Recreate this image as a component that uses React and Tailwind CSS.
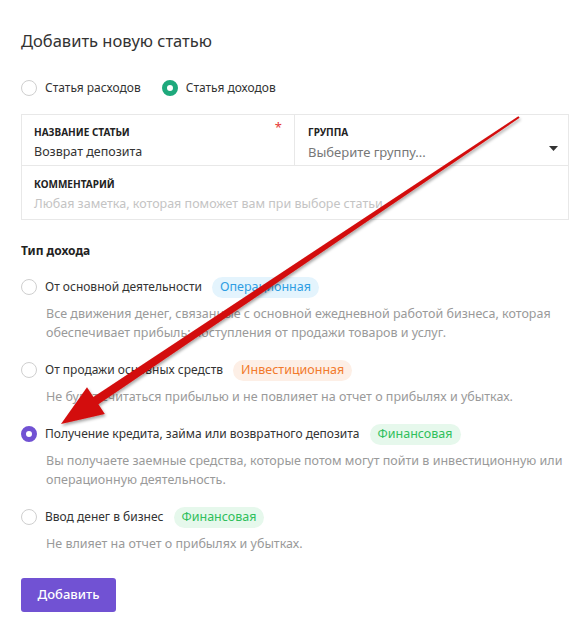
import React from "react";

function Radio({ checked, color }) {
  if (checked) {
    return (
      <span
        className={`box-border inline-block w-4 h-4 shrink-0 rounded-full border-[5px] bg-white ${color}`}
      />
    );
  }
  return <span className="box-border inline-block w-4 h-4 shrink-0 rounded-full border border-[#cfcfcf] bg-white" />;
}

function Badge({ kind, children }) {
  const cls =
    kind === "blue"
      ? "bg-[#e4f4fd] text-[#2f9ee3]"
      : kind === "orange"
      ? "bg-[#fdefe6] text-[#f27a2c]"
      : "bg-[#e6f8ec] text-[#30bf5c]";
  return (
    <span className={`ml-[10px] inline-flex h-[21px] items-center rounded-full px-[8px] text-[12.5px] ${cls}`}>
      {children}
    </span>
  );
}

function Option({ checked, title, badge, badgeKind, desc }) {
  return (
    <div>
      <div className="flex h-[22px] items-center">
        <Radio checked={checked} color="border-[#7152d3]" />
        <span className="ml-[8px] text-[12px] text-[#333]">{title}</span>
        <Badge kind={badgeKind}>{badge}</Badge>
      </div>
      <div className="mt-[6px] pl-[25px] text-[12.5px] leading-[19px] text-[#9a9a9a]">{desc}</div>
    </div>
  );
}

export default function App() {
  return (
    <div
      className="relative h-[630px] w-[575px] overflow-hidden bg-white"
      style={{ fontFamily: '"Noto Sans", "Open Sans", sans-serif' }}
    >
      <div className="pl-[21px] pr-[6px] pt-[30px]">
        <h1 className="text-[16.5px] leading-[22px] font-normal text-[#333]">Добавить новую статью</h1>

        <div className="mt-[26px] flex h-[20px] items-center text-[12px] text-[#333]">
          <Radio />
          <span className="ml-[8px]">Статья расходов</span>
          <span className="ml-[21px]" />
          <Radio checked color="border-[#1ea97c]" />
          <span className="ml-[8px]">Статья доходов</span>
        </div>

        <div className="mt-[16px] w-[548px] border border-[#e8e8e8]">
          <div className="flex h-[51px] border-b border-[#e8e8e8]">
            <div className="relative w-[273px] border-r border-[#e8e8e8] px-[12px] pt-[10px]">
              <div className="text-[10px] leading-[14px] font-bold uppercase text-[#222]">Название статьи</div>
              <div className="mt-[4px] text-[12.5px] leading-[18px] text-[#333]">Возврат депозита</div>
              <span className="absolute right-[12px] top-[5px] text-[13px] leading-[14px] text-[#e53935]">*</span>
            </div>
            <div className="relative flex-1 px-[13px] pt-[10px]">
              <div className="text-[10px] leading-[14px] font-bold uppercase text-[#222]">Группа</div>
              <div className="mt-[4px] text-[13px] leading-[18px] text-[#777]">Выберите группу...</div>
              <svg className="absolute right-[10px] top-[31px]" width="9" height="5" viewBox="0 0 9 5">
                <path d="M0 0 L9 0 L4.5 5 Z" fill="#333" />
              </svg>
            </div>
          </div>
          <div className="h-[53px] px-[12px] pt-[11px]">
            <div className="text-[10px] leading-[14px] font-bold uppercase text-[#222]">Комментарий</div>
            <div className="mt-[4px] text-[12.5px] leading-[18px] text-[#c4c4c4]">
              Любая заметка, которая поможет вам при выборе статьи
            </div>
          </div>
        </div>

        <div className="mt-[22px] text-[12px] leading-[18px] font-bold text-[#222]">Тип дохода</div>

        <div className="mt-[16px] flex flex-col gap-[17px]">
          <Option
            title="От основной деятельности"
            badge="Операционная"
            badgeKind="blue"
            desc="Все движения денег, связанные с основной ежедневной работой бизнеса, которая обеспечивает прибыль: поступления от продажи товаров и услуг."
          />
          <Option
            title="От продажи основных средств"
            badge="Инвестиционная"
            badgeKind="orange"
            desc="Не будет считаться прибылью и не повлияет на отчет о прибылях и убытках."
          />
          <Option
            checked
            title="Получение кредита, займа или возвратного депозита"
            badge="Финансовая"
            badgeKind="green"
            desc="Вы получаете заемные средства, которые потом могут пойти в инвестиционную или операционную деятельность."
          />
          <Option
            title="Ввод денег в бизнес"
            badge="Финансовая"
            badgeKind="green"
            desc="Не влияет на отчет о прибылях и убытках."
          />
        </div>

        <button className="mt-[25px] h-[34px] w-[95px] rounded-[3px] bg-[#7152d3] text-[13px] font-medium text-white">
          Добавить
        </button>
      </div>

      <svg
        className="pointer-events-none absolute left-0 top-0"
        width="575"
        height="630"
        viewBox="0 0 575 630"
      >
        <defs>
          <filter id="sh" x="-10%" y="-10%" width="120%" height="120%">
            <feDropShadow dx="1" dy="2" stdDeviation="1.5" floodColor="#000" floodOpacity="0.35" />
          </filter>
        </defs>
        <polygon
          points="518.4,116.2 93.4,396.9 87,387.3 61,424 104.8,413.9 98.4,404.3 519.6,117.8"
          fill="#d30b0b"
          filter="url(#sh)"
        />
      </svg>
    </div>
  );
}
